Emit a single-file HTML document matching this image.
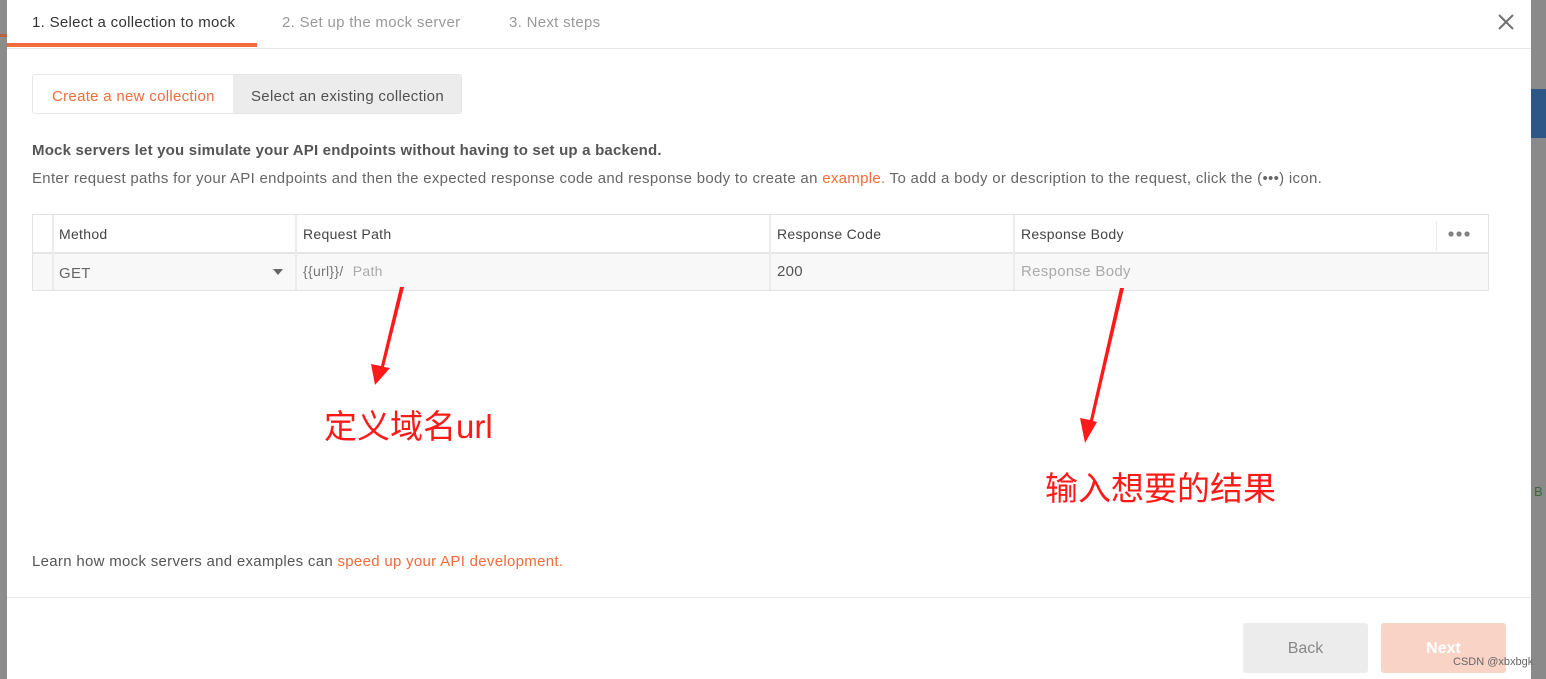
<!DOCTYPE html>
<html><head><meta charset="utf-8"><style>
*{margin:0;padding:0;box-sizing:border-box}
body{width:1546px;height:679px;overflow:hidden;position:relative;background:#fff;font-family:"Liberation Sans","Noto Sans CJK SC",sans-serif;color:#505050}
.abs{position:absolute}
.t{font-size:15px;letter-spacing:0.3px;white-space:nowrap}
</style></head><body>
<div class="abs" style="left:0;top:0;width:7px;height:679px;background:#8c8c8c"></div>
<div class="abs" style="left:0;top:34px;width:7px;height:3px;background:#b5643f"></div>
<div class="abs" style="left:1531px;top:0;width:15px;height:679px;background:#8a8a8a"></div>
<div class="abs" style="left:1531px;top:89px;width:15px;height:49px;background:#2d5786"></div>
<div class="abs" style="left:1534px;top:484px;font-size:13px;color:#3a6a3a">B</div>

<div class="abs t" style="left:32px;top:14px;color:#333">1. Select a collection to mock</div>
<div class="abs t" style="left:282px;top:14px;color:#999">2. Set up the mock server</div>
<div class="abs t" style="left:509px;top:14px;color:#999">3. Next steps</div>
<div class="abs" style="left:7px;top:48px;width:1524px;height:1px;background:#e6e6e6"></div>
<div class="abs" style="left:7px;top:43px;width:250px;height:4px;background:#f26b3a"></div>
<svg class="abs" style="left:1496px;top:12px" width="20" height="20"><path d="M3 3L17 17M17 3L3 17" stroke="#707070" stroke-width="2"/></svg>

<div class="abs" style="left:32px;top:74px;width:430px;height:40px;border:1px solid #e6e6e6;border-radius:3px;overflow:hidden">
<div class="abs" style="left:200px;top:0;width:230px;height:40px;background:#ececec"></div>
</div>
<div class="abs t" style="left:52px;top:88px;color:#f26b3a">Create a new collection</div>
<div class="abs t" style="left:251px;top:88px;color:#505050">Select an existing collection</div>

<div class="abs t" style="left:32px;top:142px;font-weight:bold;color:#555;letter-spacing:0.2px">Mock servers let you simulate your API endpoints without having to set up a backend.</div>
<div class="abs t" style="left:32px;top:170px;color:#666">Enter request paths for your API endpoints and then the expected response code and response body to create an <span style="color:#f26b3a">example.</span> To add a body or description to the request, click the (•••) icon.</div>

<div class="abs" style="left:32px;top:214px;width:1457px;height:77px;border:1px solid #e3e3e3"></div>
<div class="abs" style="left:33px;top:252px;width:1455px;height:38px;background:#f8f8f8;border-top:2px solid #e6e6e6"></div>
<div class="abs" style="left:52px;top:215px;width:2px;height:75px;background:#ececec"></div>
<div class="abs" style="left:295px;top:215px;width:2px;height:75px;background:#ececec"></div>
<div class="abs" style="left:769px;top:215px;width:2px;height:75px;background:#ececec"></div>
<div class="abs" style="left:1013px;top:215px;width:2px;height:75px;background:#ececec"></div>
<div class="abs" style="left:1436px;top:222px;width:1px;height:28px;background:#e6e6e6"></div>
<div class="abs t" style="left:59px;top:226px;font-size:14px;color:#444">Method</div>
<div class="abs t" style="left:303px;top:226px;font-size:14px;color:#444">Request Path</div>
<div class="abs t" style="left:777px;top:226px;font-size:14px;color:#444">Response Code</div>
<div class="abs t" style="left:1021px;top:226px;font-size:14px;color:#444">Response Body</div>
<svg class="abs" style="left:1448px;top:230px" width="24" height="8"><circle cx="3" cy="4" r="2.6" fill="#808080"/><circle cx="11" cy="4" r="2.6" fill="#808080"/><circle cx="19" cy="4" r="2.6" fill="#808080"/></svg>
<div class="abs t" style="left:59px;top:265px;color:#666">GET</div>
<div class="abs" style="left:273px;top:269px;width:0;height:0;border-left:5px solid transparent;border-right:5px solid transparent;border-top:6px solid #666"></div>
<div class="abs t" style="left:303px;top:263px;font-size:14px;color:#777">{{url}}/ <span style="color:#aaa;margin-left:5px">Path</span></div>
<div class="abs t" style="left:777px;top:263px;color:#555">200</div>
<div class="abs t" style="left:1021px;top:263px;color:#aaa">Response Body</div>

<svg class="abs" style="left:0;top:0" width="1546" height="679">
<polygon points="404,287 400,287 381,366 371,364 375,385 390,368 384,367" fill="#ff1a1a"/>
<polygon points="1124,288 1120,288 1090,420 1080,418 1085,443 1097,422 1093,421" fill="#ff1a1a"/>
</svg>
<div class="abs" style="left:324px;top:400px;font-size:33px;color:#ff1a1a;white-space:nowrap">定义域名url</div>
<div class="abs" style="left:1045px;top:462px;font-size:33px;color:#ff1a1a;white-space:nowrap">输入想要的结果</div>

<div class="abs t" style="left:32px;top:553px;color:#555">Learn how mock servers and examples can <span style="color:#f26b3a">speed up your API development.</span></div>
<div class="abs" style="left:7px;top:597px;width:1524px;height:1px;background:#e6e6e6"></div>
<div class="abs" style="left:1243px;top:623px;width:125px;height:50px;background:#ececec;border-radius:3px;color:#888;font-size:16px;text-align:center;line-height:52px">Back</div>
<div class="abs" style="left:1381px;top:623px;width:125px;height:50px;background:#f9d3c5;border-radius:3px;color:#fff;font-size:16px;font-weight:bold;text-align:center;line-height:52px">Next</div>
<div class="abs" style="left:1453px;top:656px;font-size:11px;color:#666">CSDN @xbxbgk</div>
</body></html>
